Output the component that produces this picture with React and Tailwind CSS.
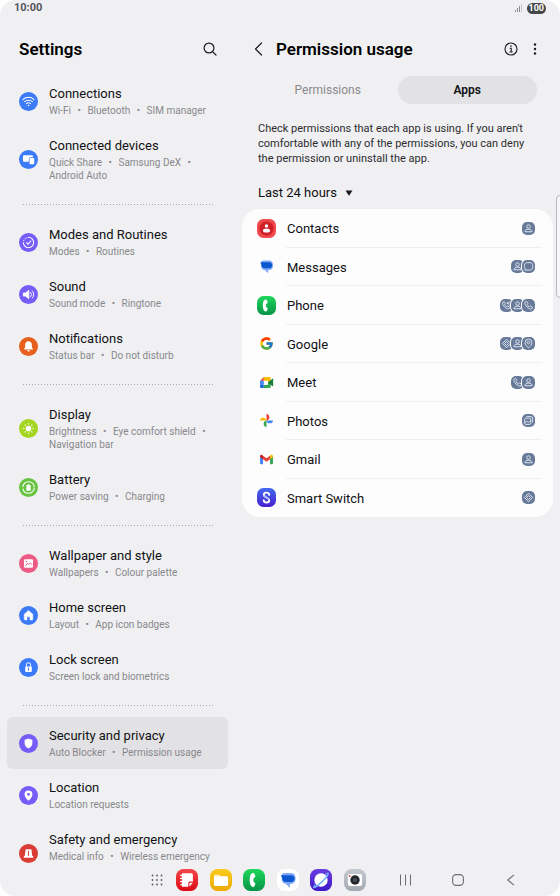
import React from "react";
import { FcGoogle } from "react-icons/fc";

const settingsGroups = [
  [
    { title: "Connections", sub: ["Wi-Fi", "Bluetooth", "SIM manager"], icon: "wifi", color: "bg-[#3c7bf8]" },
    { title: "Connected devices", sub: ["Quick Share", "Samsung DeX", "Android Auto"], icon: "devices", color: "bg-[#3c7bf8]" },
  ],
  [
    { title: "Modes and Routines", sub: ["Modes", "Routines"], icon: "modes", color: "bg-[#775cf8]" },
    { title: "Sound", sub: ["Sound mode", "Ringtone"], icon: "sound", color: "bg-[#775cf8]" },
    { title: "Notifications", sub: ["Status bar", "Do not disturb"], icon: "bell", color: "bg-[#e65f1c]" },
  ],
  [
    { title: "Display", sub: ["Brightness", "Eye comfort shield", "Navigation bar"], icon: "sun", color: "bg-[#a4d61f]" },
    { title: "Battery", sub: ["Power saving", "Charging"], icon: "battery", color: "bg-[#67c342]" },
  ],
  [
    { title: "Wallpaper and style", sub: ["Wallpapers", "Colour palette"], icon: "picture", color: "bg-[#ec5a86]" },
    { title: "Home screen", sub: ["Layout", "App icon badges"], icon: "home", color: "bg-[#3c7bf8]" },
    { title: "Lock screen", sub: ["Screen lock and biometrics"], icon: "lock", color: "bg-[#3c7bf8]" },
  ],
  [
    { title: "Security and privacy", sub: ["Auto Blocker", "Permission usage"], icon: "shield", color: "bg-[#775cf8]", active: true },
    { title: "Location", sub: ["Location requests"], icon: "pin", color: "bg-[#775cf8]" },
    { title: "Safety and emergency", sub: ["Medical info", "Wireless emergency"], icon: "siren", color: "bg-[#d93d35]", tall: true },
  ],
];

const apps = [
  { name: "Contacts", badges: ["person"] },
  { name: "Messages", badges: ["person", "chat"] },
  { name: "Phone", badges: ["calls", "person", "call"] },
  { name: "Google", badges: ["nearby", "person", "place"] },
  { name: "Meet", badges: ["call", "person"] },
  { name: "Photos", badges: ["media"] },
  { name: "Gmail", badges: ["person"] },
  { name: "Smart Switch", badges: ["nearby"] },
];

const glyphs = {
  wifi: (
    <g fill="none" stroke="#fff" strokeWidth="1.3" strokeLinecap="round">
      <path d="M5 9.6a10 10 0 0 1 14 0M7.2 12.2a7 7 0 0 1 9.6 0M9.4 14.7a4 4 0 0 1 5.2 0" />
      <circle cx="12" cy="17" r="1" fill="#fff" stroke="none" />
    </g>
  ),
  devices: (
    <g fill="#fff">
      <path d="M6.5 6.5h9.6a1.5 1.5 0 0 1 1.5 1.5v1h-2.8a2.4 2.4 0 0 0-2.4 2.4v3.4H6.5A1.5 1.5 0 0 1 5 13.3V8a1.5 1.5 0 0 1 1.5-1.5z" />
      <rect x="13.3" y="10" width="6" height="8" rx="1.3" />
    </g>
  ),
  modes: (
    <g fill="none" stroke="#fff" strokeWidth="1.3" strokeLinecap="round">
      <path d="M12 5.500a6.500 6.500 0 1 1-6.500 6.500" />
      <path d="M6 9.500l.1-.2M7.700 7.300l.1-.1M9.800 5.900l.1 0" />
      <path d="M9.300 12l2.100 2.100 3.600-4" />
    </g>
  ),
  sound: (
    <g>
      <path d="M5.500 10h2.700l4.300-3.400v10.800L8.200 14H5.500z" fill="#fff" stroke="#fff" strokeWidth="1" strokeLinejoin="round" />
      <path d="M14.800 9.300a4 4 0 0 1 0 5.400M16.900 7.600a6.400 6.400 0 0 1 0 8.800" fill="none" stroke="#fff" strokeWidth="1.2" strokeLinecap="round" />
    </g>
  ),
  bell: (
    <g fill="#fff">
      <path d="M12 5.500c2.600 0 4.200 1.900 4.200 4.300v2.700l1.300 2.200c.3.600 0 1.100-.6 1.100H7.100c-.6 0-.9-.5-.6-1.100l1.300-2.200V9.800c0-2.400 1.600-4.300 4.200-4.300z" />
      <path d="M10.200 16.700h3.600c-.2 1-.9 1.600-1.800 1.600s-1.600-.6-1.800-1.600z" />
    </g>
  ),
  sun: (
    <g fill="#fff" stroke="#fff" strokeWidth="1.3" strokeLinecap="round">
      <circle cx="12" cy="12" r="2.900" />
      <path d="M12 5.600v.8M12 17.600v.8M5.600 12h.8M17.600 12h.8M7.500 7.500l.5.500M16 16l.5.500M7.500 16.500l.5-.5M16 8l.5-.5" />
    </g>
  ),
  battery: (
    <g>
      <circle cx="12" cy="12" r="7.300" fill="none" stroke="#fff" strokeWidth="1.4" strokeDasharray="20.9 2" />
      <path d="M10.900 7.800h2.200v.9h.7c.5 0 .9.400.9.900v5.600c0 .5-.4.900-.9.900h-3.600a.9.900 0 0 1-.9-.9V9.600c0-.5.4-.9.900-.9h.7z" fill="#fff" />
    </g>
  ),
  picture: (
    <g>
      <rect x="6.300" y="6.700" width="11.400" height="10.600" rx="1.600" fill="#fff" />
      <path d="M7.800 15.200l3-3.300 1.700 1.500 2-2.200 2 2.300" fill="none" stroke="#ec5a86" strokeWidth="1.2" />
      <circle cx="9.300" cy="9.400" r="0.9" fill="#ec5a86" />
    </g>
  ),
  home: <path d="M12 5.600l5.400 4.700v6.300c0 .6-.4 1-1 1h-2.500v-3.900h-3.800v3.900H7.600c-.6 0-1-.4-1-1v-6.300z" fill="#fff" stroke="#fff" strokeWidth="0.6" strokeLinejoin="round" />,
  lock: (
    <g>
      <path d="M9.300 11V8.700a2.700 2.700 0 0 1 5.400 0V11" fill="none" stroke="#fff" strokeWidth="1.2" />
      <rect x="7.800" y="10.600" width="8.400" height="7.200" rx="1.300" fill="#fff" />
      <path d="M12 12.700v2.800" stroke="#3c7bf8" strokeWidth="1.2" strokeLinecap="round" />
    </g>
  ),
  shield: <path d="M12 5.800c1.600.9 3.200 1.300 4.900 1.400v4.600c0 3-1.900 5.200-4.900 6.500-3-1.300-4.900-3.500-4.900-6.500V7.200c1.700-.1 3.300-.5 4.900-1.400z" fill="#fff" />,
  pin: (
    <g>
      <path d="M12 5.600a5 5 0 0 1 5 5c0 3.300-3 5.800-5 8.100-2-2.300-5-4.800-5-8.100a5 5 0 0 1 5-5z" fill="#fff" />
      <circle cx="12" cy="10.500" r="1.800" fill="#775cf8" />
    </g>
  ),
  siren: (
    <g fill="#fff">
      <path d="M9.200 6.500h5.600c.5 0 .8.300.9.800l1.100 7.700H7.200l1.100-7.700c.1-.5.400-.8.900-.8z" />
      <rect x="6" y="15.300" width="12" height="2.100" rx="0.800" />
      <path d="M12 8.700v6.300" stroke="#d93d35" strokeWidth="1.2" />
    </g>
  ),
};

const badgeGlyphs = {
  person: (
    <>
      <circle cx="10" cy="7" r="2.700" />
      <path d="M4.500 15c0-2.600 2.200-4 5.500-4s5.500 1.400 5.500 4z" />
    </>
  ),
  chat: <path d="M9 4h3c2.700 0 4.500 1.700 4.500 4.500v2.500c0 2.800-1.800 4.500-4.500 4.500H4.300l.8-2.300C4 12.300 3.700 11.300 3.700 10V8.500C3.700 5.700 5.500 4 9 4z" />,
  call: <path d="M5 4.500l2-1 2.200 3.400-1.400 1.700c.8 1.500 2 2.700 3.500 3.500l1.700-1.400 3.400 2.200-1 2c-1 1.300-3.500.6-5.600-.8a15 15 0 0 1-4-4c-1.300-2.100-2.100-4.600-.8-5.600z" />,
  calls: (
    <>
      <path d="M4.500 5l1.800-1 2 3-1.200 1.600c.8 1.500 1.900 2.600 3.400 3.400l1.600-1.200 3 2-1 1.800c-1 1.200-3.200.6-5.200-.7a14 14 0 0 1-3.700-3.700C3.900 8.200 3.400 6 4.500 5z" />
      <path d="M15.500 3.500l-4 4m0-3v3h3M14 9.500h2.500" />
    </>
  ),
  nearby: (
    <>
      <path d="M10 3.500l6.500 6.500-6.500 6.500L3.500 10z" strokeLinejoin="round" />
      <path d="M10 7l3 3-3 3-3-3z" />
    </>
  ),
  place: (
    <>
      <path d="M10 3.300a5.300 5.300 0 0 1 5.300 5.300c0 3.300-3 5.700-5.300 8-2.300-2.300-5.300-4.700-5.300-8A5.300 5.300 0 0 1 10 3.300z" />
      <circle cx="10" cy="8.600" r="2" />
    </>
  ),
  media: (
    <>
      <rect x="4" y="6.500" width="9.500" height="9.500" rx="1.800" />
      <path d="M6.500 4h7.500c1.500 0 2.300.8 2.300 2.300V13M4.500 13.500l2.800-2.500 2.500 2 3.500-3.500" />
    </>
  ),
};

function MessageMark() {
  return (
    <g>
      <path d="M9.500 5h8.500c3.200 0 5.500 2.300 5.500 5.500v3c0 3.200-2.300 5.500-5.500 5.500h-1.500v3.300c0 .9-.8 1.200-1.400.6L11.500 19c-3 0-5.500-2.200-5.500-5.500V8.500C6 6.500 7.300 5 9.500 5z" fill="#7fa9f7" />
      <path d="M5.300 8.800c-.4-.6-.1-1 .6-1h11.800c2.700 0 4.800 1.900 4.800 4.400s-2.100 4.400-4.800 4.400H11.500c-2.700 0-4.800-1.900-4.800-4.400 0-1.300-.6-2.400-1.400-3.400z" fill="#0b57d0" />
    </g>
  );
}

function PhoneMark() {
  return (
    <path
      d="M11.600 5.500c1.300-.5 2.500-.3 3 .9l1 2.300c.4 1-.1 1.700-1.200 2.200-.9.400-1.100 1.600-1.100 3.100s.2 2.700 1.100 3.100c1.100.5 1.600 1.200 1.200 2.200l-1 2.300c-.5 1.200-1.700 1.400-3 .9-2-.8-3.100-4-3.100-8.500s1.100-7.700 3.100-8.500z"
      fill="#fff"
    />
  );
}

const appIcons = {
  Contacts: (
    <>
      <rect width="28" height="28" rx="9.500" fill="#f04a4c" />
      <circle cx="14" cy="14" r="10.500" fill="#cf1f28" />
      <circle cx="14" cy="10.300" r="2.600" fill="#fff" />
      <rect x="8.800" y="14.300" width="10.400" height="5.600" rx="2.800" fill="#fff" />
    </>
  ),
  Messages: <MessageMark />,
  Phone: (
    <>
      <rect width="28" height="28" rx="9.500" fill="url(#green)" />
      <PhoneMark />
    </>
  ),
  Meet: (
    <>
      <path d="M4.500 11.500L10 6v5.500z" fill="#ea4335" />
      <path d="M10 6h8.500c1 0 1.700.7 1.700 1.700V12l-4 2v-2.500H10z" fill="#fbbc04" />
      <path d="M4.500 11.500H10v6H4.500z" fill="#4285f4" />
      <path d="M4.500 17.500H10V22H6.200c-1 0-1.700-.7-1.700-1.700z" fill="#1967d2" />
      <path d="M10 17.500h6.200V14l4-3.500v9.800c0 1-.7 1.700-1.700 1.700H10z" fill="#34a853" />
      <path d="M16.200 14l6.600-5.400c.5-.4 1-.2 1 .5v9.800c0 .7-.5.900-1 .5z" fill="#188038" />
    </>
  ),
  Photos: (
    <>
      <path d="M14 14V4.300a4.900 4.900 0 0 1 0 9.700z" fill="#ea4335" />
      <path d="M14 14h9.700a4.900 4.900 0 0 1-9.700 0z" fill="#4285f4" />
      <path d="M14 14v9.700a4.900 4.900 0 0 1 0-9.700z" fill="#34a853" />
      <path d="M14 14H4.300a4.900 4.900 0 0 1 9.700 0z" fill="#fbbc04" />
    </>
  ),
  Gmail: (
    <>
      <path d="M4.500 9.500l4.300 3.200V21H6a1.500 1.500 0 0 1-1.500-1.500z" fill="#4285f4" />
      <path d="M23.500 9.500l-4.300 3.200V21H22a1.500 1.500 0 0 0 1.500-1.500z" fill="#34a853" />
      <path d="M8.800 8.300L14 12.200l5.200-3.900v5.200L14 17.400l-5.200-3.900z" fill="#ea4335" />
      <path d="M4.500 9.200c0-1.900 2-2.800 3.500-1.600l.8.700v5.200l-4.300-3.200z" fill="#c5221f" />
      <path d="M23.500 9.200c0-1.900-2-2.800-3.500-1.600l-.8.700v5.200l4.300-3.200z" fill="#fbbc04" />
    </>
  ),
  "Smart Switch": (
    <>
      <rect width="28" height="28" rx="9.500" fill="url(#indigo)" />
      <path d="M18 10.200C17.800 8 16.200 6.800 14 6.800c-2.400 0-4 1.300-4 3.300 0 4.300 8 3.500 8 7.800 0 2-1.600 3.400-4 3.400-2.300 0-3.900-1.300-4.100-3.500" fill="none" stroke="#fff" strokeWidth="2.800" strokeLinecap="round" />
      <path d="M10.200 11c.8 3.300 7 3.300 7.700 6.300" fill="none" stroke="#a9b6ff" strokeWidth="2.200" />
    </>
  ),
};

const dockApps = [
  {
    name: "Notes",
    icon: (
      <>
        <rect width="28" height="28" rx="9.500" fill="url(#red)" />
        <path d="M7.500 5.500h12c1.200 0 2 .8 2 2V16h-3.800c-1.200 0-2 .8-2 2v4.500H7.500z" fill="#fff" />
        <path d="M21.500 17.500l-4.500 5v-3.800c0-.7.500-1.200 1.200-1.200z" fill="#fff" />
        <path d="M5.800 8h3M5.800 12h3M5.800 16h3M5.800 20h3" stroke="#fff" strokeWidth="1.500" strokeLinecap="round" />
      </>
    ),
  },
  {
    name: "My Files",
    icon: (
      <>
        <rect width="28" height="28" rx="9.500" fill="url(#yellow)" />
        <path d="M5 9c0-1.100.8-1.800 1.800-1.800h4c.6 0 1 .2 1.400.6l1 1h8c1 0 1.800.8 1.800 1.800H5z" fill="#fff3bf" />
        <rect x="5" y="10" width="18" height="11.500" rx="1.800" fill="#fff" />
      </>
    ),
  },
  {
    name: "Phone",
    icon: (
      <>
        <rect width="28" height="28" rx="9.500" fill="url(#green)" />
        <PhoneMark />
      </>
    ),
  },
  {
    name: "Messages",
    icon: (
      <>
        <rect width="28" height="28" rx="9.500" fill="#fff" />
        <MessageMark />
      </>
    ),
  },
  {
    name: "Internet",
    icon: (
      <>
        <rect width="28" height="28" rx="9.500" fill="url(#violet)" />
        <circle cx="14" cy="14" r="8.500" fill="#fff" />
        <path d="M22.500 7.500C20.500 12 12 20.500 6.500 22.500" fill="none" stroke="#79b6ff" strokeWidth="2" strokeLinecap="round" />
        <path d="M6.200 20C4.300 22.500 4 24 5 24c3 .3 18-14.500 18.300-18.200.1-1.200-1.500-.8-3.800.7" fill="none" stroke="#79b6ff" strokeWidth="1.300" strokeLinecap="round" />
      </>
    ),
  },
  {
    name: "Camera",
    icon: (
      <>
        <rect width="28" height="28" rx="9.500" fill="url(#silver)" />
        <rect x="5" y="6.500" width="18" height="15" rx="2.500" fill="#fff" />
        <circle cx="14" cy="14" r="6" fill="#22262b" />
        <circle cx="14" cy="14" r="2.600" fill="#46525c" />
        <circle cx="7.300" cy="9.200" r="1.100" fill="#e5342c" />
      </>
    ),
  },
];

function Gradient({ id, from, to }) {
  return (
    <linearGradient id={id} x1="0" y1="0" x2="0" y2="1">
      <stop offset="0" stopColor={from} />
      <stop offset="1" stopColor={to} />
    </linearGradient>
  );
}

function SettingsItem({ item }) {
  return (
    <li>
      <a
        href="#"
        className={`flex items-center gap-[11px] rounded-md pl-3 pr-1 ${item.active ? "bg-[#e2e2e4]" : ""} ${item.tall ? "min-h-[65px]" : ""}`}
      >
        <span className={`flex size-[19px] shrink-0 items-center justify-center rounded-full ${item.color}`}>
          <svg viewBox="0 0 24 24" className="size-[19px]">{glyphs[item.icon]}</svg>
        </span>
        <span className="flex flex-col gap-px self-start py-[10px]">
          <span className="text-[13px] leading-[18px] text-[#111113]">{item.title}</span>
          <span className="text-[10px] leading-[13px] text-[#88888c]">
            {item.sub.map((part, i) => (
              <React.Fragment key={part}>
                {part}
                {i < item.sub.length - 1 && <span className="mx-1">{"\u00a0•"}</span>}
                {i < item.sub.length - 1 && " "}
              </React.Fragment>
            ))}
          </span>
        </span>
      </a>
    </li>
  );
}

function PermissionBadges({ badges }) {
  return (
    <span className="flex -space-x-[2px]">
      {badges.map((badge) => (
        <svg key={badge} viewBox="0 0 20 20" className="size-[13px] rounded-[5px] bg-[#687a99] ring-1 ring-[#fdfdfe]">
          <g fill="none" stroke="#e6ebf5" strokeWidth="1.4">{badgeGlyphs[badge]}</g>
        </svg>
      ))}
    </span>
  );
}

export default function App() {
  return (
    <div className="h-screen bg-[#fdfdfe] font-['Roboto',sans-serif]">
      <div className="relative flex h-full flex-col overflow-hidden rounded-[16px] bg-[#f0f0f2]">
        <svg className="absolute size-0" aria-hidden="true">
          <defs>
            <Gradient id="green" from="#1fd75b" to="#079347" />
            <Gradient id="indigo" from="#4169ee" to="#4a1fd0" />
            <Gradient id="red" from="#f4474a" to="#dc0a14" />
            <Gradient id="yellow" from="#fbcb1c" to="#eda900" />
            <Gradient id="violet" from="#6a3be0" to="#3d18c8" />
            <Gradient id="silver" from="#c5cad0" to="#a3a9b1" />
          </defs>
        </svg>

        <div className="flex h-4 shrink-0 items-center justify-between px-[14px]">
          <span className="text-[11px] leading-4 font-bold text-[#55555a]">10:00</span>
          <span className="flex items-center gap-1">
            <svg viewBox="0 0 8 8" className="size-2" fill="#8d8d91">
              <path d="M0 6h1v2H0zM2 4h1v4H2zM4 2h1v6H4z" />
              <path d="M6 0h1v8H6z" fill="#c4c4c8" />
            </svg>
            <span className="rounded-full bg-[#47474a] px-[2px] text-[9px] leading-[11px] font-bold text-white">100</span>
          </span>
        </div>

        <div className="grid min-h-0 flex-1 grid-cols-[235fr_325fr]">
          <aside className="min-h-0 overflow-hidden px-[7px]">
            <div className="flex h-[59px] items-center justify-between pt-[7px] pr-[11px] pl-3">
              <h1 className="pt-[2px] text-[17px] font-semibold text-black">Settings</h1>
              <button aria-label="Search">
                <svg viewBox="0 0 14 14" className="size-[14px]" fill="none" stroke="#1c1c1e" strokeWidth="1.2" strokeLinecap="round">
                  <circle cx="6" cy="6" r="4.900" />
                  <path d="M9.600 9.600l3.400 3.400" />
                </svg>
              </button>
            </div>
            <nav>
              {settingsGroups.map((group, i) => (
                <React.Fragment key={i}>
                  {i > 0 && (
                    <div className="flex h-6 items-center pr-[13px] pl-4">
                      <div className="h-px w-full bg-[repeating-linear-gradient(90deg,#a9a9ad_0_1px,transparent_1px_3px)]" />
                    </div>
                  )}
                  <ul>
                    {group.map((item) => (
                      <SettingsItem key={item.title} item={item} />
                    ))}
                  </ul>
                </React.Fragment>
              ))}
            </nav>
          </aside>

          <main className="min-h-0 overflow-hidden px-[7px]">
            <header className="flex h-[59px] items-center pt-[7px] pr-4 pl-3">
              <button aria-label="Back">
                <svg viewBox="0 0 9 14" className="h-[14px] w-[9px]" fill="none" stroke="#1c1c1e" strokeWidth="1.2" strokeLinecap="round" strokeLinejoin="round">
                  <path d="M7.500 1L1.500 7l6 6" />
                </svg>
              </button>
              <h2 className="ml-[13px] flex-1 pt-[2px] text-[17px] font-semibold text-black">Permission usage</h2>
              <button aria-label="Information">
                <svg viewBox="0 0 14 14" className="size-[14px]" fill="none" stroke="#1c1c1e" strokeWidth="1.1">
                  <circle cx="7" cy="7" r="6" />
                  <path d="M5.700 6.200H7.200V10M5.500 10h3.200" />
                  <circle cx="7" cy="4.100" r="0.8" fill="#1c1c1e" stroke="none" />
                </svg>
              </button>
              <button aria-label="More options" className="ml-[15px]">
                <svg viewBox="0 0 4 12" className="h-3 w-1" fill="#1c1c1e">
                  <circle cx="2" cy="1.500" r="1.200" />
                  <circle cx="2" cy="6" r="1.200" />
                  <circle cx="2" cy="10.500" r="1.200" />
                </svg>
              </button>
            </header>

            <div role="tablist" className="mt-px grid grid-cols-2 px-4 text-[12px]">
              <button role="tab" aria-selected="false" className="h-7 rounded-full text-[#8a8a8e]">Permissions</button>
              <button role="tab" aria-selected="true" className="h-7 rounded-full bg-[#e2e2e4] font-semibold text-[#111113]">Apps</button>
            </div>

            <p className="mt-[17px] px-4 text-[11px] leading-[15px] text-[#2c2c2f]">
              Check permissions that each app is using. If you aren't comfortable with any of the permissions, you can deny the permission or uninstall the app.
            </p>

            <div className="mt-[17px] flex h-5 items-center gap-2 pl-4">
              <select aria-label="Period" className="appearance-none bg-transparent text-[13px] text-[#111113]" defaultValue="24h">
                <option value="24h">Last 24 hours</option>
              </select>
              <svg viewBox="0 0 8 6" className="h-[6px] w-2" fill="#1c1c1e">
                <path d="M.5 .5h7L4.400 5.200a.5.500 0 0 1-.8 0z" />
              </svg>
            </div>

            <ul className="mt-[6px] grid min-h-[308px] auto-rows-fr rounded-[18px] bg-[#fdfdfe] pr-[11px] pl-[15px]">
              {apps.map((app, i) => (
                <li key={app.name} className="flex items-stretch gap-[10px]">
                  <span className="flex w-[19px] items-center">
                    {app.name === "Google" ? (
                      <span className="flex size-[19px] items-center justify-center">
                        <FcGoogle className="size-[15px]" />
                      </span>
                    ) : (
                      <svg viewBox="0 0 28 28" className="size-[19px]">{appIcons[app.name]}</svg>
                    )}
                  </span>
                  <a
                    href="#"
                    className={`flex flex-1 items-center justify-between border-b pt-px pr-[7px] pl-px text-[13px] text-[#111113] ${i < apps.length - 1 ? "border-[#f0f0f2]" : "border-transparent"}`}
                  >
                    <span className="pt-px">{app.name}</span>
                    <PermissionBadges badges={app.badges} />
                  </a>
                </li>
              ))}
            </ul>
          </main>
        </div>

        <footer className="flex h-[33px] shrink-0 items-center justify-end pr-[39px]">
          <button aria-label="All apps" className="mr-[13px]">
            <svg viewBox="0 0 12 12" className="size-3" fill="#5c5c60">
              {[1.5, 6, 10.5].map((y) => [1.5, 6, 10.5].map((x) => <circle key={`${x}-${y}`} cx={x} cy={y} r="0.9" />))}
            </svg>
          </button>
          <div className="flex w-[190px] justify-between">
            {dockApps.map((app) => (
              <button key={app.name} aria-label={app.name}>
                <svg viewBox="0 0 28 28" className="size-[22px]">{app.icon}</svg>
              </button>
            ))}
          </div>
          <div className="ml-[29px] flex w-[126px] justify-between">
            <button aria-label="Recents" className="flex size-5 items-center justify-center">
              <svg viewBox="0 0 12 12" className="size-3" stroke="#6f6f73" strokeWidth="1">
                <path d="M1.500 .5v11M6.500 .5v11M11.500 .5v11" />
              </svg>
            </button>
            <button aria-label="Home" className="flex size-5 items-center justify-center">
              <svg viewBox="0 0 12 12" className="size-3" fill="none" stroke="#6f6f73" strokeWidth="1.1">
                <rect x="0.600" y="0.600" width="10.800" height="10.800" rx="3.600" />
              </svg>
            </button>
            <button aria-label="Back" className="flex size-5 items-center justify-center">
              <svg viewBox="0 0 12 12" className="size-3" fill="none" stroke="#6f6f73" strokeWidth="1.1">
                <path d="M9 .8L2.800 6 9 11.200" />
              </svg>
            </button>
          </div>
        </footer>

        <div className="absolute top-[195px] -right-2 h-[103px] w-3 rounded-[4px] border border-[#b9b9bd] bg-[#f7f7f9]" />
      </div>
    </div>
  );
}
